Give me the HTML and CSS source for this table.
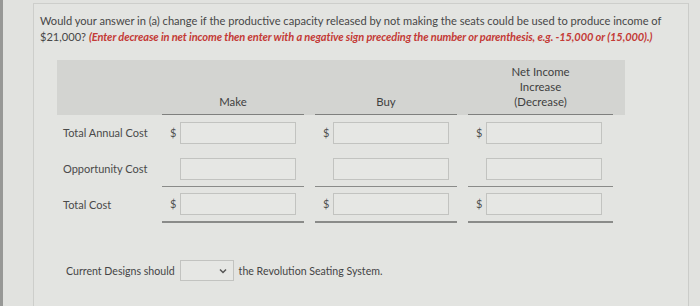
FILE: index.html
```html
<!DOCTYPE html>
<html>
<head>
<meta charset="utf-8">
<link rel="stylesheet" href="styles.css">
</head>
<body>
<div class="screen">
  <div class="edge"></div>
  <div class="panel">
    <div class="question">
      <div class="qline">Would your answer in (a) change if the productive capacity released by not making the seats could be used to produce income of</div>
      <div class="qline"><span>$21,000?</span> <em class="hint">(Enter decrease in net income then enter with a negative sign preceding the number or parenthesis, e.g. -15,000 or (15,000).)</em></div>
    </div>

    <div class="grid">
      <div class="hd band-start"></div>
      <div class="hd col">Make</div>
      <div class="hd"></div>
      <div class="hd col">Buy</div>
      <div class="hd"></div>
      <div class="hd col">Net Income<br>Increase<br>(Decrease)</div>
      <div class="hd"></div>

      <div class="lbl">Total Annual Cost</div>
      <div class="cell"><span class="dollar">$</span><span class="inp"></span></div>
      <div></div>
      <div class="cell"><span class="dollar">$</span><span class="inp"></span></div>
      <div></div>
      <div class="cell"><span class="dollar">$</span><span class="inp"></span></div>
      <div></div>

      <div class="lbl">Opportunity Cost</div>
      <div class="cell sub"><span class="dollar"></span><span class="inp"></span></div>
      <div></div>
      <div class="cell sub"><span class="dollar"></span><span class="inp"></span></div>
      <div></div>
      <div class="cell sub"><span class="dollar"></span><span class="inp"></span></div>
      <div></div>

      <div class="lbl">Total Cost</div>
      <div class="cell total"><span class="dollar">$</span><span class="inp"></span></div>
      <div></div>
      <div class="cell total"><span class="dollar">$</span><span class="inp"></span></div>
      <div></div>
      <div class="cell total"><span class="dollar">$</span><span class="inp"></span></div>
      <div></div>
    </div>

    <div class="decision">
      <span>Current Designs should</span>
      <span class="select"><svg width="8" height="6" viewBox="0 0 8 6"><path d="M1 1.5 L4 4.5 L7 1.5" fill="none" stroke="#555" stroke-width="1.5"/></svg></span>
      <span>the Revolution Seating System.</span>
    </div>
  </div>
</div>
</body>
</html>
```

FILE: styles.css
```css
html, body {
  margin: 0;
  padding: 0;
}
body {
  width: 700px;
  height: 306px;
  overflow: hidden;
  background: #e1e2df;
  font-family: Lato, "Open Sans", sans-serif;
  color: #454545;
}
.screen {
  display: flex;
  height: 306px;
}
.edge {
  width: 3px;
  background: #979896;
  flex: none;
}
.panel {
  margin: 3px 0 0 30px;
  width: 656px;
  border-left: 1px solid #cdcecb;
  border-top: 1px solid #cdcecb;
  border-right: 1px solid #cbccc9;
  background: #e3e4e1;
  padding: 9px 0 0 6px;
  box-sizing: border-box;
}
.question {
  font-size: 11.1px;
  line-height: 16px;
  color: #474747;
}
.qline {
  white-space: nowrap;
  height: 16px;
}
.hint {
  color: #c43a36;
  font-weight: bold;
  font-style: italic;
  letter-spacing: -0.12px;
}
.grid {
  margin: 15px 0 0 17px;
  display: grid;
  grid-template-columns: 105px 142px 11px 142px 11px 145px 12px;
  grid-template-rows: 55px 36px 36px 36px;
}
.hd {
  background: #d3d4d1;
}
.hd.col {
  border-bottom: 1px solid #7f807e;
  display: flex;
  align-items: flex-end;
  justify-content: center;
  text-align: center;
  font-size: 11.4px;
  line-height: 15px;
  padding-bottom: 5px;
  color: #3f3f3f;
}
.lbl {
  font-size: 11px;
  color: #4a4a4a;
  padding: 11px 0 0 6px;
}
.cell {
  display: flex;
  align-items: flex-start;
  padding-top: 7px;
  box-sizing: border-box;
}
.cell.sub {
  border-bottom: 1px solid #8a8b89;
}
.cell.total {
  padding-top: 6px;
  border-bottom: 2px solid #8a8b89;
}
.dollar {
  width: 18px;
  padding-left: 8px;
  box-sizing: border-box;
  font-size: 11px;
  line-height: 22px;
  color: #505050;
}
.inp {
  width: 116px;
  height: 22px;
  border: 1px solid #c2c3c0;
  background: #e6e7e4;
  box-sizing: border-box;
}
.decision {
  margin: 37px 0 0 26px;
  display: flex;
  align-items: center;
  gap: 5px;
  font-size: 10.6px;
  color: #454545;
}
.select {
  width: 54px;
  height: 21px;
  border: 1px solid #c2c3c0;
  background: #e6e7e4;
  box-sizing: border-box;
  display: flex;
  align-items: center;
  justify-content: flex-end;
  padding-right: 6px;
}
```
